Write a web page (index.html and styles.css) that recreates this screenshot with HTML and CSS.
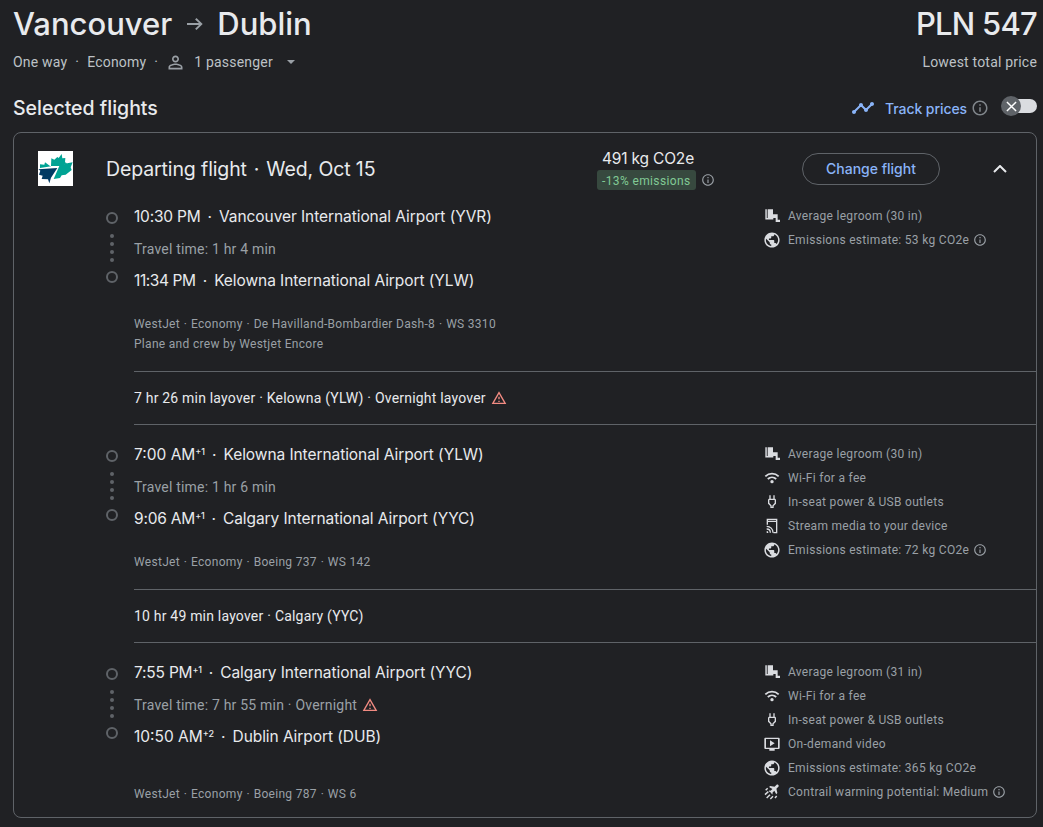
FILE: index.html
```
<!DOCTYPE html>
<html lang="en">
<head>
    <meta charset="utf-8">
    <title>Vancouver to Dublin</title>
    <link rel="stylesheet" href="styles.css">
</head>
<body>
    <!-- shared icons -->
    <svg class="sprite">
        <symbol id="info" viewBox="0 0 24 24"><path d="M11 7h2v2h-2zm0 4h2v6h-2zm1-9C6.480 2 2 6.480 2 12s4.480 10 10 10 10-4.480 10-10S17.520 2 12 2zm0 18c-4.410 0-8-3.590-8-8s3.590-8 8-8 8 3.590 8 8-3.590 8-8 8z"/></symbol>
        <symbol id="warning" viewBox="0 0 24 24"><path d="M12 5.990L19.530 19H4.470L12 5.990M12 2L1 21h22L12 2zm1 14h-2v2h2v-2zm0-6h-2v4h2v-4z"/></symbol>
        <symbol id="seat" viewBox="0 0 24 24"><path d="M2 2h2.200v13H14v2.200H2zM5.500 2h8v7.500h7v8H24V21h-6.500v-6h-12z"/></symbol>
        <symbol id="globe" viewBox="1.500 1.500 21 21"><path d="M12 2C6.480 2 2 6.480 2 12s4.480 10 10 10 10-4.480 10-10S17.520 2 12 2zM4 12c0-.61.08-1.210.21-1.780L8.990 15v1c0 1.100.9 2 2 2v1.930C7.060 19.430 4 16.070 4 12zm13.890 5.400c-.26-.81-1-1.400-1.900-1.400h-1v-3c0-.55-.45-1-1-1h-6v-2h2c.55 0 1-.45 1-1V7h2c1.100 0 2-.9 2-2v-.41C17.920 5.770 20 8.650 20 12c0 2.080-.81 3.980-2.110 5.400z"/></symbol>
        <symbol id="wifi" viewBox="0 0 24 24"><path d="M2 9.500c5.800-5.300 14.200-5.300 20 0M5.700 13.500c3.700-3.300 8.900-3.300 12.600 0" fill="none" stroke="currentColor" stroke-width="2.800"/><circle cx="12" cy="17.500" r="2.500"/></symbol>
        <symbol id="power" viewBox="0 0 24 24"><path d="M16 9v4.660l-3.500 3.510V19h-1v-1.830L8 13.650V9h8m0-7h-2v5h-4V2H8v5c-1.100 0-2 .9-2 2v5.500L9.500 18v3h5v-3l3.500-3.510V9c0-1.100-.9-2-2-2V2z"/></symbol>
        <symbol id="stream" viewBox="0 0 24 24"><path d="M5 10V2h14v20h-5M5 5h14" fill="none" stroke="currentColor" stroke-width="2"/><path d="M4 12.500c5.500 0 9.500 4 9.500 9.500M4 16.500c3.300 0 5.500 2.200 5.500 5.500" fill="none" stroke="currentColor" stroke-width="2"/><path d="M4 19.500c1.500 0 2.500 1 2.500 3H4z"/></symbol>
        <symbol id="video" viewBox="0 0 24 24"><path d="M9 6.500v9l7-4.500zM22 2.500H2C1 2.500.5 3 .5 4v14c0 1 .5 1.500 1.500 1.500h6V22h8v-2.500h6c1 0 1.500-.5 1.500-1.500V4c0-1-.5-1.500-1.500-1.500zm-1 15H3v-13h18v13z"/></symbol>
        <symbol id="contrail" viewBox="0 0 24 24"><path transform="translate(5.500 -1.500) rotate(45 10 10) scale(.8)" d="M21 16v-3l-7-4.500V3.500c0-1.500-1-2.500-2.500-2.500S9 2 9 3.500v5L2 13v3l7-2v5l-2 1.500V22l4.500-1 4.500 1v-1.500L14 19v-5l7 2z"/><path d="M2.500 9.500l3-3M1.500 16l5-4.500M4 21l5-5M9.500 22.500l4-4M16.500 21l2.500-3" fill="none" stroke="currentColor" stroke-width="2.200"/></symbol>
    </svg>

    <header class="trip">
        <div class="title-row">
            <h1>Vancouver
                <svg class="arrow" viewBox="0 0 24 24"><path d="M13.500 6l-1.400 1.400 3.900 3.700H4v1.900h12l-3.900 3.700 1.400 1.400 6.200-6.050z"/></svg>
                <span>Dublin</span>
            </h1>
            <div class="price">PLN 547</div>
        </div>
        <div class="info-row">
            <div class="trip-info">
                <span>One way</span><span class="sep">·</span><span>Economy</span><span class="sep">·</span>
                <svg class="person" viewBox="0 0 24 24"><path d="M12 5.900c1.160 0 2.100.94 2.100 2.100s-.94 2.100-2.100 2.100S9.900 9.160 9.900 8s.94-2.100 2.100-2.100m0 9c2.970 0 6.100 1.460 6.100 2.100v1.100H5.900V17c0-.64 3.130-2.100 6.100-2.100M12 4C9.790 4 8 5.790 8 8s1.790 4 4 4 4-1.790 4-4-1.790-4-4-4zm0 9c-2.670 0-8 1.340-8 4v3h16v-3c0-2.660-5.330-4-8-4z"/></svg>
                <span>1 passenger</span>
                <svg class="caret" viewBox="0 0 8 4"><path d="M0 0h8L4 4z"/></svg>
            </div>
            <div>Lowest total price</div>
        </div>
    </header>

    <div class="selected">
        <h2>Selected flights</h2>
        <div class="track">
            <svg class="timeline" viewBox="0 0 24 24"><path d="M23 8c0 1.100-.9 2-2 2-.18 0-.35-.02-.51-.07l-3.560 3.550c.05.16.07.34.07.52 0 1.100-.9 2-2 2s-2-.9-2-2c0-.18.02-.36.07-.52l-2.550-2.550c-.16.05-.34.07-.52.07s-.36-.02-.52-.07l-4.550 4.560c.05.16.07.33.07.51 0 1.100-.9 2-2 2s-2-.9-2-2 .9-2 2-2c.18 0 .35.02.51.07l4.560-4.550C8.020 9.360 8 9.180 8 9c0-1.100.9-2 2-2s2 .9 2 2c0 .18-.02.36-.07.52l2.550 2.550c.16-.05.34-.07.52-.07s.36.02.52.07l3.550-3.560C19.020 8.350 19 8.180 19 8c0-1.100.9-2 2-2s2 .9 2 2z"/></svg>
            <a class="track-label">Track prices</a>
            <svg class="info-big"><use href="#info"/></svg>
            <div class="switch"><span class="knob"><svg viewBox="0 0 12 12"><path d="M1 1l10 10M11 1L1 11"/></svg></span></div>
        </div>
    </div>

    <main class="card">
        <div class="card-header">
            <svg class="logo" viewBox="0 0 105 105">
                <rect width="105" height="105" fill="#fff"/>
                <path fill="#00a394" d="M6 40l13 1 2-7 14 10 5 2-34 5zM39 45l1-23 9 4 9-8 4 3 9-12 2 13 9-1-1 13 6 3-20 7zM64 45l24-8 16-3-6 15 3 8-18 14-12 2-5 8-19 3z"/>
                <path fill="#003a63" d="M1 55l57-4-19 29-5 17-4-12-19-1 3-10-11-3 4-12z"/>
            </svg>
            <div class="flight-title">Departing flight<span class="dot">·</span>Wed, Oct 15</div>
            <div class="emissions">
                <div class="co2">491 kg CO2e</div>
                <div class="badge-row"><span class="badge">-13% emissions</span><svg class="info"><use href="#info"/></svg></div>
            </div>
            <button class="change">Change flight</button>
            <svg class="chevron" viewBox="0 0 14 8"><path d="M1 7l6-6 6 6"/></svg>
        </div>

        <section class="leg">
            <div class="stops"><i class="ring"></i><i class="bead"></i><i class="bead"></i><i class="bead"></i><i class="bead"></i><i class="ring"></i></div>
            <div class="route">
                <div class="stop"><span class="time snug">10:30 PM</span><span class="dot">·</span>Vancouver International Airport (YVR)</div>
                <div class="travel">Travel time: 1 hr 4 min</div>
                <div class="stop"><span class="time tight">11:34 PM</span><span class="dot">·</span>Kelowna International Airport (YLW)</div>
                <div class="details">WestJet<b>·</b>Economy<b>·</b>De Havilland-Bombardier Dash-8<b>·</b>WS 3310<br>Plane and crew by Westjet Encore</div>
            </div>
            <ul class="amenities">
                <li><svg><use href="#seat"/></svg>Average legroom (30 in)</li>
                <li><svg><use href="#globe"/></svg>Emissions estimate: 53 kg CO2e<svg class="info"><use href="#info"/></svg></li>
            </ul>
        </section>

        <div class="layover"><span>7 hr 26 min layover<b>·</b>Kelowna (YLW)<b>·</b>Overnight layover</span><svg class="warning"><use href="#warning"/></svg></div>

        <section class="leg">
            <div class="stops"><i class="ring"></i><i class="bead"></i><i class="bead"></i><i class="bead"></i><i class="bead"></i><i class="ring"></i></div>
            <div class="route">
                <div class="stop"><span class="time">7:00 AM<sup>+1</sup></span><span class="dot">·</span>Kelowna International Airport (YLW)</div>
                <div class="travel">Travel time: 1 hr 6 min</div>
                <div class="stop"><span class="time snug">9:06 AM<sup>+1</sup></span><span class="dot">·</span>Calgary International Airport (YYC)</div>
                <div class="details">WestJet<b>·</b>Economy<b>·</b>Boeing 737<b>·</b>WS 142</div>
            </div>
            <ul class="amenities">
                <li><svg><use href="#seat"/></svg>Average legroom (30 in)</li>
                <li><svg><use href="#wifi"/></svg>Wi-Fi for a fee</li>
                <li><svg><use href="#power"/></svg>In-seat power &amp; USB outlets</li>
                <li><svg><use href="#stream"/></svg>Stream media to your device</li>
                <li><svg><use href="#globe"/></svg>Emissions estimate: 72 kg CO2e<svg class="info"><use href="#info"/></svg></li>
            </ul>
        </section>

        <div class="layover"><span>10 hr 49 min layover<b>·</b>Calgary (YYC)</span></div>

        <section class="leg">
            <div class="stops"><i class="ring"></i><i class="bead"></i><i class="bead"></i><i class="bead"></i><i class="bead"></i><i class="ring"></i></div>
            <div class="route">
                <div class="stop"><span class="time snug">7:55 PM<sup>+1</sup></span><span class="dot">·</span>Calgary International Airport (YYC)</div>
                <div class="travel"><span>Travel time: 7 hr 55 min<b>·</b>Overnight</span><svg class="warning"><use href="#warning"/></svg></div>
                <div class="stop"><span class="time">10:50 AM<sup>+2</sup></span><span class="dot">·</span>Dublin Airport (DUB)</div>
                <div class="details">WestJet<b>·</b>Economy<b>·</b>Boeing 787<b>·</b>WS 6</div>
            </div>
            <ul class="amenities">
                <li><svg><use href="#seat"/></svg>Average legroom (31 in)</li>
                <li><svg><use href="#wifi"/></svg>Wi-Fi for a fee</li>
                <li><svg><use href="#power"/></svg>In-seat power &amp; USB outlets</li>
                <li><svg><use href="#video"/></svg>On-demand video</li>
                <li class="plain"><svg><use href="#globe"/></svg>Emissions estimate: 365 kg CO2e</li>
                <li><svg><use href="#contrail"/></svg>Contrail warming potential: Medium<svg class="info"><use href="#info"/></svg></li>
            </ul>
        </section>
    </main>
</body>
</html>
```
FILE: styles.css
```
* {
    box-sizing: border-box;
    margin: 0;
    padding: 0;
}

body {
    background-color: #202124;
    color: #e8eaed;
    font-family: Roboto, Arial, sans-serif;
    font-size: 14px;
    padding: 0 6px 0 13px;
    overflow: hidden;
}

svg {
    fill: currentColor;
    flex: none;
}

.sprite {
    display: none;
}

h1, h2, .price, .track-label, .flight-title, .co2, .change, .stop {
    font-family: Inter, "Open Sans", sans-serif;
    white-space: nowrap;
}

b {
    margin: 0 3.8px;
    font-weight: 400;
}

.title-row {
    display: flex;
    justify-content: space-between;
    height: 48px;
    line-height: 48px;
}

h1, .price {
    font-size: 31px;
    font-weight: 500;
}

.price {
    letter-spacing: -0.75px;
}

h1 {
    display: flex;
    align-items: center;
}

.arrow {
    width: 24px;
    height: 24px;
    margin: 0 10.5px;
    color: #9aa0a6;
}

.info-row {
    display: flex;
    justify-content: space-between;
    height: 28px;
    line-height: 28px;
    color: #bdc1c6;
    letter-spacing: 0.2px;
}

.trip-info {
    display: flex;
    align-items: center;
}

.sep {
    margin: 0 8px;
}

.person {
    width: 21px;
    height: 21px;
    margin: 0 8px 0 -1px;
    color: #9aa0a6;
}

.caret {
    width: 8px;
    height: 4px;
    margin-left: 14px;
    color: #9aa0a6;
}

.selected {
    display: flex;
    justify-content: space-between;
    align-items: center;
    height: 56px;
    padding-top: 8px;
}

h2 {
    font-size: 19.5px;
    font-weight: 500;
}

.track {
    display: flex;
    align-items: center;
    color: #8ab4f8;
}

.timeline {
    width: 24px;
    height: 24px;
    margin-right: 10px;
}

.track-label {
    font-size: 14px;
    font-weight: 500;
    letter-spacing: -0.08px;
}

.info-big {
    width: 18px;
    height: 18px;
    margin-left: 4px;
    color: #80868b;
}

.switch {
    width: 34px;
    height: 14px;
    margin-left: 14px;
    margin-bottom: 4px;
    border-radius: 7px;
    background-color: #dadce0;
}

.knob {
    display: flex;
    align-items: center;
    justify-content: center;
    width: 20px;
    height: 20px;
    margin: -3px 0 0 -2px;
    border-radius: 50%;
    background-color: #5f6368;
}

.knob svg {
    width: 11px;
    height: 11px;
    stroke: #fff;
    stroke-width: 1.6;
}

.card {
    border: 1px solid #5f6368;
    border-radius: 8px;
    padding-bottom: 13px;
}

.card-header {
    display: flex;
    align-items: center;
    height: 71px;
    padding-left: 24px;
}

.logo {
    width: 35px;
    height: 35px;
}

.flight-title {
    width: 491px;
    margin-left: 33px;
    font-size: 19.5px;
    letter-spacing: -0.12px;
}

.dot {
    margin: 0 7px;
}

.emissions {
    width: 205px;
}

.co2 {
    padding-left: 5px;
    font-size: 15.5px;
    letter-spacing: -0.18px;
    line-height: 22px;
}

.badge-row {
    display: flex;
    align-items: center;
    height: 20px;
}

.badge {
    height: 20px;
    padding: 0 5px;
    border-radius: 3px;
    background-color: #37493f;
    color: #81c995;
    font-size: 12px;
    line-height: 22px;
    letter-spacing: 0.37px;
}

.badge-row .info {
    margin-left: 5px;
}

.change {
    width: 138px;
    height: 32px;
    border: 1px solid #5f6368;
    border-radius: 16px;
    background: none;
    color: #8ab4f8;
    font-size: 14px;
    font-weight: 500;
}

.chevron {
    width: 14px;
    height: 8px;
    margin-left: 53px;
    fill: none;
    stroke: #e8eaed;
    stroke-width: 2;
}

.leg {
    display: flex;
    padding: 17px 0 17px 92px;
}

.card-header + .leg {
    padding-top: 0;
}

.leg:last-child {
    padding-bottom: 0;
}

.stops {
    display: flex;
    flex-direction: column;
    align-items: center;
    width: 12px;
    padding-top: 8px;
}

.ring {
    width: 12px;
    height: 12px;
    border: 2px solid #5f6368;
    border-radius: 50%;
}

.ring:first-child {
    margin-bottom: 10px;
}

.ring:last-child {
    margin-top: 5px;
}

.bead {
    width: 4px;
    height: 4px;
    margin-bottom: 4px;
    border-radius: 50%;
    background-color: #5f6368;
}

.route {
    display: flex;
    flex-direction: column;
    width: 646px;
    padding-left: 16px;
}

.stop {
    height: 24px;
    font-size: 15.5px;
    line-height: 26px;
    letter-spacing: -0.07px;
}

.time {
    letter-spacing: 0;
}

.time.snug {
    letter-spacing: -0.2px;
}

.time.tight {
    letter-spacing: -0.4px;
}

sup {
    font-size: 9px;
    font-weight: 500;
    line-height: 0;
    vertical-align: 5px;
}

.travel {
    display: flex;
    align-items: center;
    height: 24px;
    margin: 9px 0 7px;
    color: #9aa0a6;
    letter-spacing: 0.2px;
}

.details {
    margin-top: auto;
    padding-top: 22px;
    color: #9aa0a6;
    font-size: 12px;
    line-height: 20px;
    letter-spacing: 0.3px;
}

.amenities {
    list-style: none;
}

.amenities li {
    display: flex;
    align-items: center;
    height: 24px;
    color: #9aa0a6;
    font-size: 12px;
    letter-spacing: 0.3px;
    white-space: nowrap;
}

.amenities .plain {
    height: 23px;
    margin-bottom: 1px;
}

.amenities svg {
    width: 16px;
    height: 16px;
    margin-right: 8px;
    color: #dadce0;
}

.info, .amenities .info {
    width: 14px;
    height: 14px;
    color: #9aa0a6;
}

.amenities .info {
    margin: 0 0 0 4px;
}

.layover {
    display: flex;
    align-items: center;
    height: 54px;
    margin-left: 120px;
    border-top: 1px solid #5f6368;
    border-bottom: 1px solid #5f6368;
    letter-spacing: 0.2px;
}

.warning {
    width: 16px;
    height: 16px;
    margin-left: 5px;
    color: #f28b82;
}
```
